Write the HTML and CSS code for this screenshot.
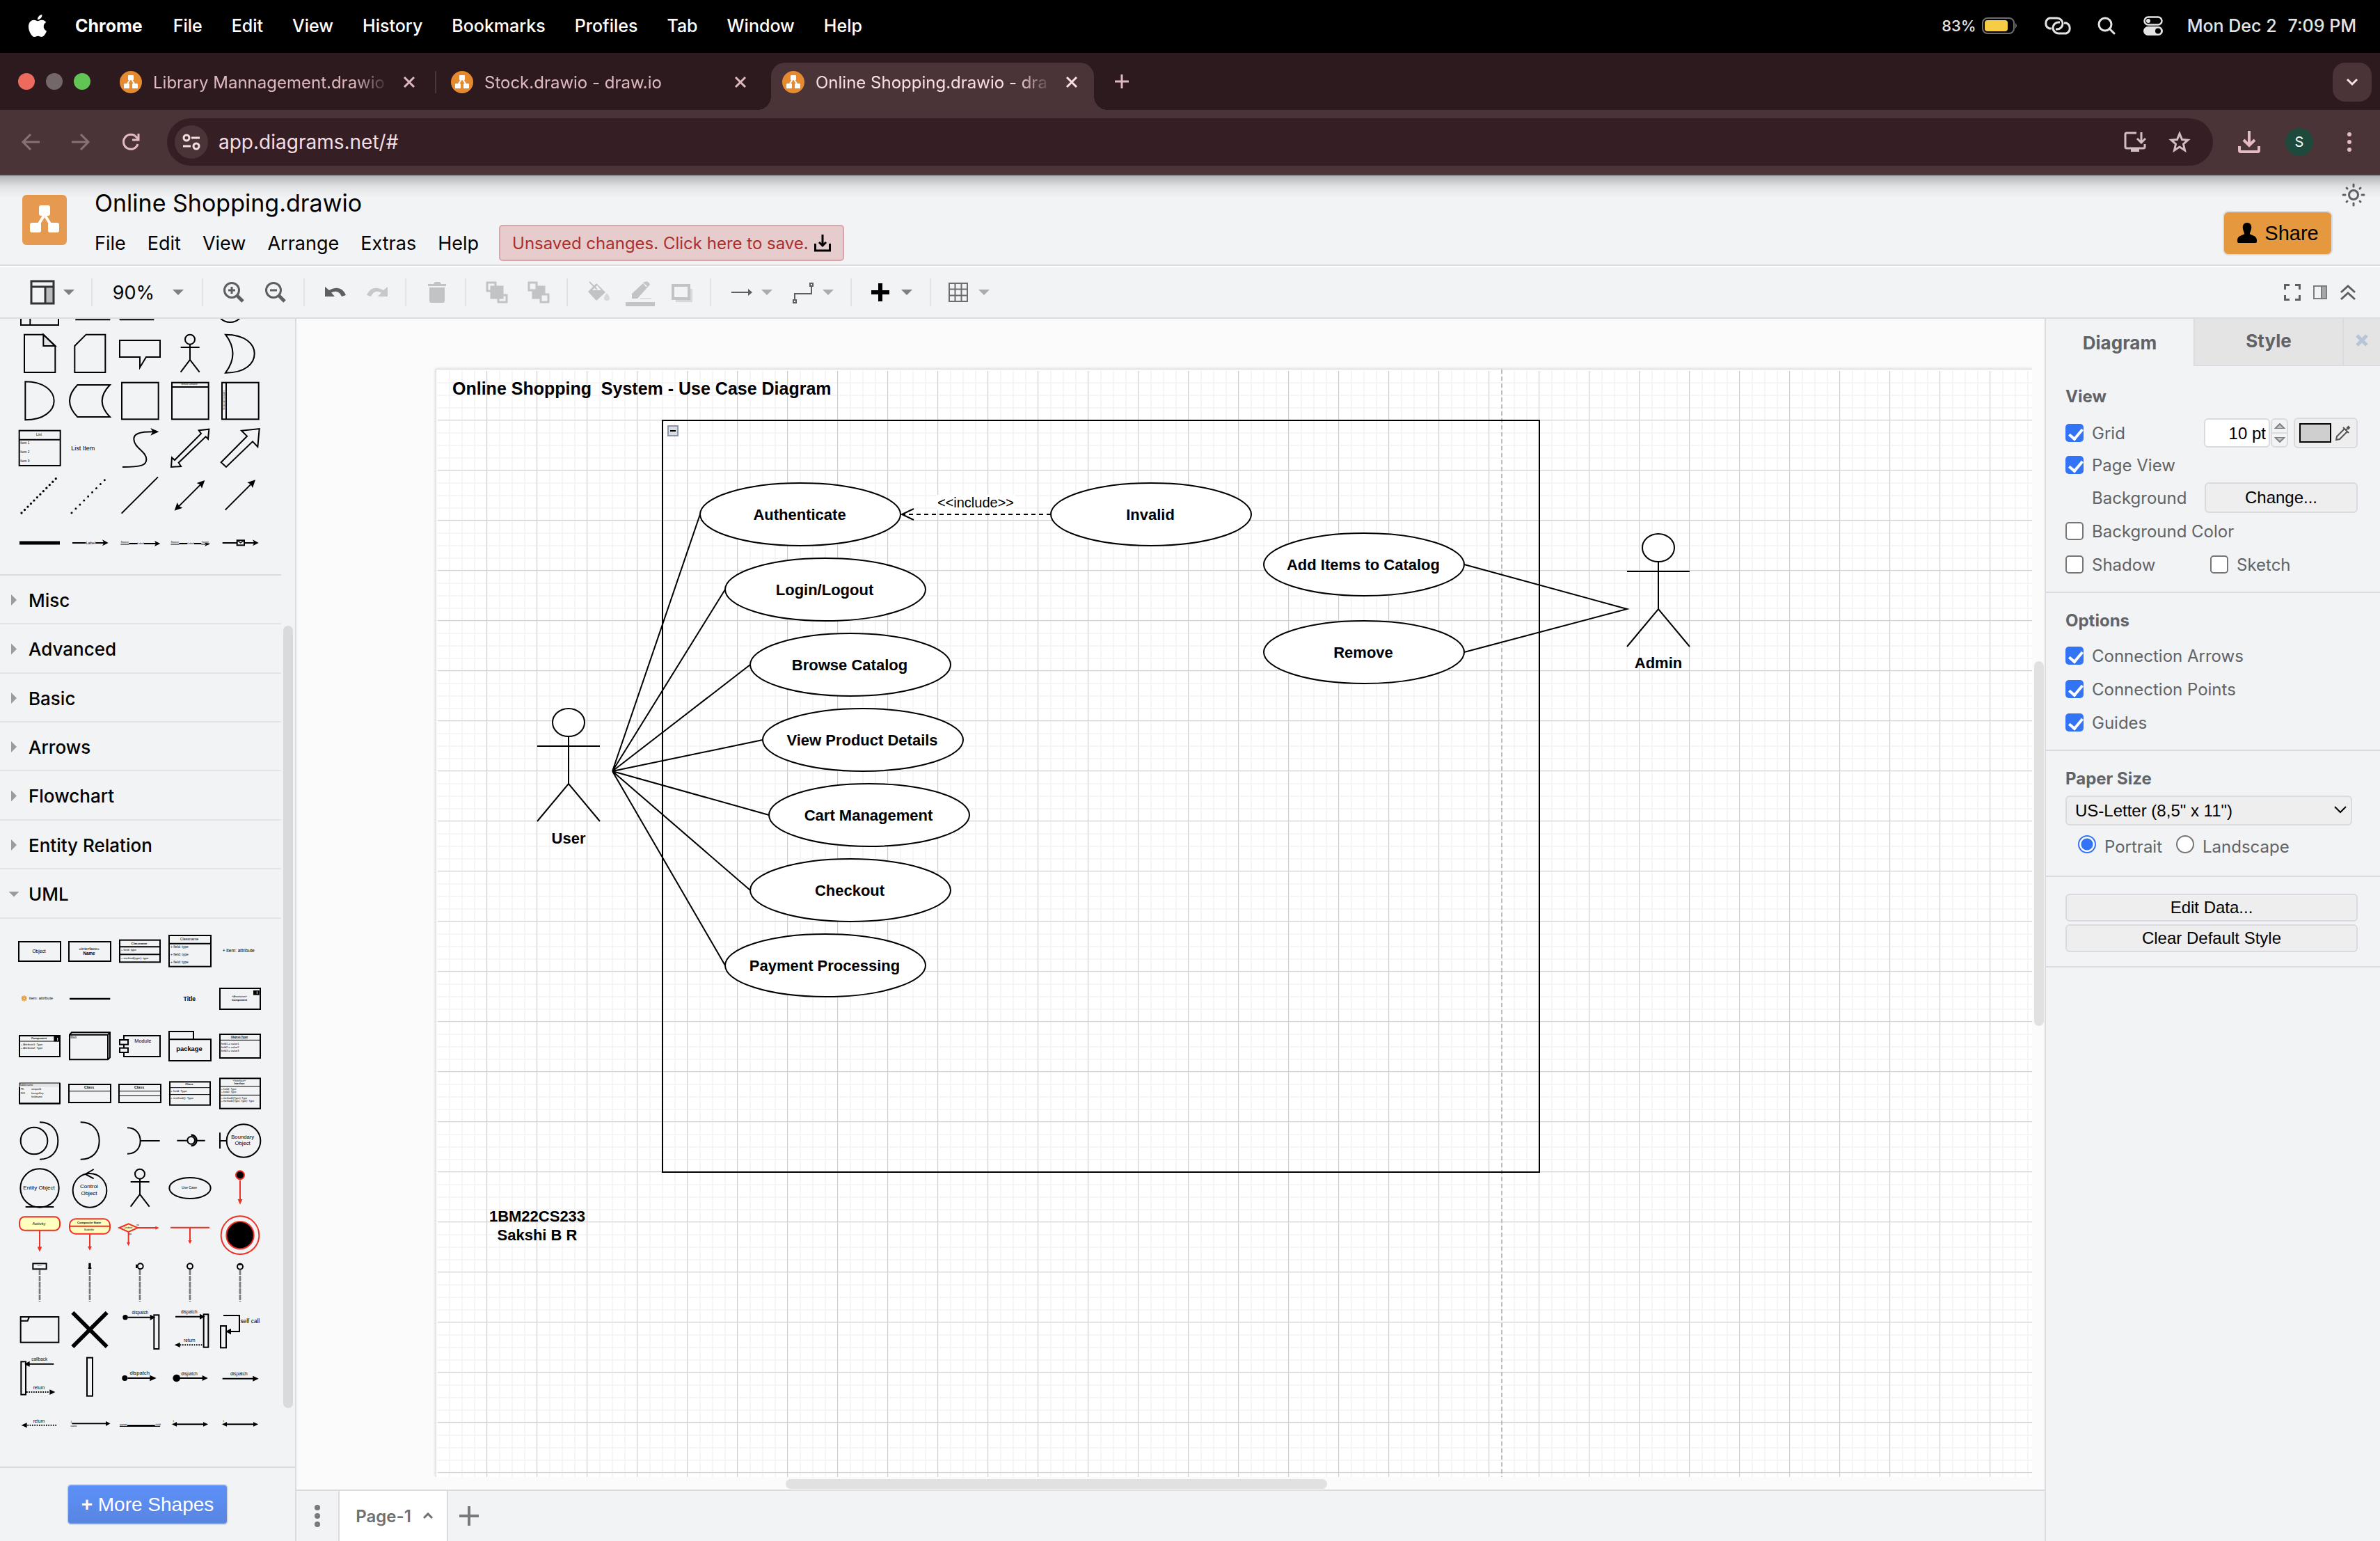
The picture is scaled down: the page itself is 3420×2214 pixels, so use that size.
FILE: index.html
```html
<!DOCTYPE html>
<html lang="en">
<head>
<meta charset="utf-8">
<title>Online Shopping.drawio - draw.io</title>
<link rel="stylesheet" href="styles.css">
</head>
<body>
<svg class="defs" width="0" height="0" aria-hidden="true">
  <symbol id="logo" viewBox="0 0 64 72"><path d="M31 30 20 48M33 30 44 48" stroke="#fff" stroke-width="4"/><rect x="24" y="15" width="16" height="15" rx="3" fill="#fff"/><rect x="11" y="40" width="16" height="14" rx="3" fill="#fff"/><rect x="37" y="40" width="16" height="14" rx="3" fill="#fff"/></symbol>
  <symbol id="fav" viewBox="0 0 32 32"><circle cx="16" cy="16" r="16" fill="#e58a2e"/><path d="M15 12 10 20M17 12 22 20" stroke="#fff" stroke-width="2"/><rect x="12" y="6" width="8" height="7" rx="1" fill="#fff"/><rect x="6" y="18" width="8" height="7" rx="1" fill="#fff"/><rect x="18" y="18" width="8" height="7" rx="1" fill="#fff"/></symbol>
  <symbol id="close" viewBox="0 0 20 20"><path d="M3 3 17 17M17 3 3 17" stroke="currentColor"/></symbol>
  <symbol id="caret" viewBox="0 0 16 8"><path d="M0 0H16L8 8Z" fill="currentColor"/></symbol>
</svg>

<header class="menubar">
  <nav class="menubar-menus">
    <svg class="apple" viewBox="0 0 24 24" fill="#fff"><path d="M12.152 6.896c-.948 0-2.415-1.078-3.96-1.04-2.04.027-3.91 1.183-4.961 3.014-2.117 3.675-.546 9.103 1.519 12.09 1.013 1.454 2.208 3.09 3.792 3.039 1.52-.065 2.09-.987 3.935-.987 1.831 0 2.35.987 3.96.948 1.637-.026 2.676-1.48 3.676-2.948 1.156-1.688 1.636-3.325 1.662-3.415-.039-.013-3.182-1.221-3.22-4.857-.026-3.04 2.48-4.494 2.597-4.559-1.429-2.09-3.623-2.324-4.39-2.376-2-.156-3.675 1.09-4.61 1.09zM15.53 3.83c.843-1.012 1.4-2.427 1.245-3.83-1.207.052-2.662.805-3.532 1.818-.78.896-1.454 2.338-1.273 3.714 1.338.104 2.715-.688 3.559-1.701"/></svg>
    <button class="strong">Chrome</button><button>File</button><button>Edit</button><button>View</button><button>History</button><button>Bookmarks</button><button>Profiles</button><button>Tab</button><button>Window</button><button>Help</button>
  </nav>
  <div class="status">
    <span class="battery">83%<svg width="52" height="24" viewBox="0 0 52 24"><rect x="1" y="1" width="45" height="22" rx="7" fill="none" stroke="#6e6e6e" stroke-width="2"/><rect x="4" y="4" width="33" height="16" rx="4" fill="#f7cd46"/><path d="M48 8q4 4 0 8z" fill="#6e6e6e"/></svg></span>
    <svg width="44" height="28" viewBox="0 0 44 28" fill="none" stroke="#e4e4e4" stroke-width="3"><path d="M13 18H10A8 8 0 0 1 10 3H21A8 8 0 0 1 21 19H19"/><path d="M31 10H34A8 8 0 0 1 34 25H23A8 8 0 0 1 23 9H25"/></svg>
    <svg class="search" width="26" height="26" viewBox="0 0 26 26" fill="none" stroke="#e4e4e4" stroke-width="3"><circle cx="11" cy="11" r="9"/><path d="M17 17 24 24" stroke-linecap="round"/></svg>
    <svg width="28" height="28" viewBox="0 0 28 28"><rect x="1.500" y="1.500" width="25" height="11" rx="5.500" fill="none" stroke="#e4e4e4" stroke-width="2.500"/><circle cx="7" cy="7" r="3" fill="#e4e4e4"/><rect y="15" width="28" height="13" rx="6.500" fill="#e4e4e4"/><circle cx="21" cy="21.500" r="4" fill="#000"/></svg>
    <span class="clock"><span>Mon Dec 2</span><span>7:09 PM</span></span>
  </div>
</header>

<div class="tabstrip">
  <div class="lights"><i class="red"></i><i class="gray"></i><i class="green"></i></div>
  <div class="tab"><svg class="fav"><use href="#fav"/></svg><span>Library Mannagement.drawio</span><button aria-label="Close tab"><svg class="x"><use href="#close"/></svg></button></div>
  <div class="tab divided"><svg class="fav"><use href="#fav"/></svg><span>Stock.drawio - draw.io</span><button aria-label="Close tab"><svg class="x"><use href="#close"/></svg></button></div>
  <div class="tab active"><svg class="fav"><use href="#fav"/></svg><span>Online Shopping.drawio - dra</span><button aria-label="Close tab"><svg class="x"><use href="#close"/></svg></button></div>
  <button class="newtab" aria-label="New tab"><svg width="22" height="22" viewBox="0 0 22 22"><path d="M11 1V21M1 11H21" stroke="#dfb9c0" stroke-width="3"/></svg></button>
  <button class="tabsearch" aria-label="Search tabs"><svg width="18" height="12" viewBox="0 0 18 12" fill="none" stroke="#fbdfe4" stroke-width="3"><path d="M2 2 9 9 16 2"/></svg></button>
</div>

<div class="navbar">
  <div class="navbtns">
    <button aria-label="Back"><svg viewBox="0 0 28 28" fill="none" stroke="#8a7174" stroke-width="3"><path d="M27 14H3M14 3 3 14 14 25"/></svg></button>
    <button aria-label="Forward"><svg viewBox="0 0 28 28" fill="none" stroke="#8a7174" stroke-width="3"><path d="M1 14H25M14 3 25 14 14 25"/></svg></button>
    <button aria-label="Reload"><svg viewBox="0 0 28 28" fill="none" stroke="#e3bcc3" stroke-width="3"><path d="M24 17A10.500 10.500 0 1 1 22 7L25 10"/><path d="M25 2V11H16" /></svg></button>
  </div>
  <div class="omnibox">
    <button class="siteinfo" aria-label="Site information"><svg width="26" height="26" viewBox="0 0 26 26" fill="none" stroke="#f3dde0" stroke-width="3"><circle cx="6" cy="7" r="4"/><path d="M13 7H25M1 19H12"/><circle cx="20" cy="19" r="4"/></svg></button>
    <input type="text" value="app.diagrams.net/#" aria-label="Address">
    <button aria-label="Install"><svg width="32" height="30" viewBox="0 0 32 30" fill="none" stroke="#d2bec1" stroke-width="3"><path d="M18 2H4Q2 2 2 4V22Q2 24 4 24H28Q30 24 30 22V18M25 1V15M19 10 25 16 31 10"/><path d="M10 27H22" stroke-width="4"/></svg></button>
    <button aria-label="Bookmark"><svg width="32" height="32" viewBox="0 0 32 32" fill="none" stroke="#d2bec1" stroke-width="3"><path d="M16 4 19.500 12.500 28 13.200 21.500 19 23.500 28 16 23 8.500 28 10.500 19 4 13.200 12.500 12.500Z"/></svg></button>
  </div>
  <button class="dl" aria-label="Downloads"><svg width="32" height="32" viewBox="0 0 32 32" fill="none" stroke="#e3bcc3" stroke-width="4"><path d="M16 0V21M8 13 16 21 24 13M2 22V28Q2 30 4 30H28Q30 30 30 28V22"/></svg></button>
  <button class="avatar" aria-label="Profile">S</button>
  <button class="kebab" aria-label="More"><svg width="8" height="30" viewBox="0 0 8 30" fill="#e3bcc3"><circle cx="4" cy="4" r="3"/><circle cx="4" cy="15" r="3"/><circle cx="4" cy="26" r="3"/></svg></button>
</div>

<div class="app">
  <div class="apphead">
    <div class="logo"><svg width="64" height="72"><use href="#logo"/></svg></div>
    <div class="headmain">
      <h1>Online Shopping.drawio</h1>
      <nav class="appmenu"><button>File</button><button>Edit</button><button>View</button><button>Arrange</button><button>Extras</button><button>Help</button>
        <button class="unsaved">Unsaved changes. Click here to save.<svg width="24" height="26" viewBox="0 0 24 26" fill="none" stroke="#000" stroke-width="3"><path d="M12 1V17M7 12 12 17 17 12M1.500 14V24H22.500V14"/></svg></button>
      </nav>
    </div>
    <div class="headright">
      <button class="sun" aria-label="Appearance"><svg width="34" height="34" viewBox="0 0 34 34" fill="none" stroke="#606367" stroke-width="3" stroke-linecap="round"><circle cx="17" cy="17" r="6.500"/><path d="M17 2V5M17 29V32M2 17H5M29 17H32M7 7 8 8M26 26 27 27M7 27 8 26M26 8 27 7"/></svg></button>
      <button class="share"><svg width="30" height="30" viewBox="0 0 30 30"><path d="M15 0C20 0 22 4 21 9C20 13 19 14 19 16C20 18 29 18 29 25V27Q29 29 27 29H3Q1 29 1 27V25C1 18 10 18 11 16C11 14 10 13 9 9C8 4 10 0 15 0Z"/></svg>Share</button>
    </div>
  </div>

  <div class="toolbar">
    <div class="group g-first"><button class="lay" aria-label="View"><svg width="36" height="36" viewBox="0 0 36 36" fill="none" stroke="#333" stroke-width="3"><rect x="22" y="10" width="11" height="23" fill="#b9babb" stroke="none"/><rect x="2" y="2" width="32" height="32"/><path d="M2 10H34M22 10V34"/></svg></button><svg class="car mid"><use href="#caret"/></svg></div>
    <div class="group g-zoom"><button class="zoom">90%</button><svg class="car mid"><use href="#caret"/></svg></div>
    <div class="group">
      <button aria-label="Zoom in"><svg viewBox="0 0 32 32" fill="none" stroke="#5d5f61" stroke-width="3"><circle cx="13" cy="13" r="10.500"/><path d="M13 8V18M8 13H18"/><path d="M21 21 29 29" stroke-width="5"/></svg></button>
      <button aria-label="Zoom out"><svg viewBox="0 0 32 32" fill="none" stroke="#5d5f61" stroke-width="3"><circle cx="13" cy="13" r="10.500"/><path d="M8 13H18"/><path d="M21 21 29 29" stroke-width="5"/></svg></button>
    </div>
    <div class="group">
      <button aria-label="Undo"><svg viewBox="0 0 32 32" fill="#5d5f61"><path d="M1 8V22H15L10 16.500Q20 11 25 22L31 20Q24 4 7 13Z"/></svg></button>
      <button aria-label="Redo"><svg viewBox="0 0 32 32" fill="#c6c8ca"><path d="M31 8V22H17L22 16.500Q12 11 7 22L1 20Q8 4 25 13Z"/></svg></button>
    </div>
    <div class="group one"><button aria-label="Delete"><svg viewBox="0 0 32 32" fill="#c1c3c4"><path d="M3 4H11L13 1H20L22 4H29V7H3ZM5 9H27V28Q27 31 24 31H8Q5 31 5 28Z"/></svg></button></div>
    <div class="group">
      <button aria-label="To front"><svg viewBox="0 0 32 32" fill="none" stroke="#c1c3c4" stroke-width="3"><path d="M14 8V2H2V14H8M24 20H30V30H18V24"/><rect x="8" y="8" width="16" height="16" fill="#c1c3c4"/></svg></button>
      <button aria-label="To back"><svg viewBox="0 0 32 32" fill="none" stroke="#c1c3c4" stroke-width="3"><rect x="8" y="8" width="16" height="16" fill="#c1c3c4"/><rect x="2" y="2" width="11" height="11" fill="#f1f3f5"/><rect x="19" y="19" width="11" height="11" fill="#f1f3f5"/></svg></button>
    </div>
    <div class="group g-three">
      <button aria-label="Fill color"><svg viewBox="0 0 32 32"><path d="M1 15 13 3 26 16 13 28Z" fill="#c1c3c4"/><path d="M7 13 14 6 20 13Z" fill="#f1f3f5"/><path d="M3 1 14 12" stroke="#c1c3c4" stroke-width="2"/><path d="M28 17Q36 27 28 28Q20 27 28 17" fill="#d6d8da"/></svg></button>
      <button aria-label="Line color"><svg viewBox="0 0 32 32" overflow="visible"><path d="M4 18 20 3 24 8 28 7 12 25H4Z" fill="#c1c3c4"/><path d="M22 1Q28 -1 30 5L27 8 20 2Z" fill="#c1c3c4"/><path d="M16 25H32" stroke="#dcdee0" stroke-width="2"/><path d="M-5 33H37" stroke="#c1c3c4" stroke-width="6"/></svg></button>
      <button aria-label="Shadow"><svg viewBox="0 0 32 32"><rect x="7" y="11" width="24" height="19" fill="#d6d8da"/><rect x="3" y="6" width="23" height="19" fill="#f1f3f5" stroke="#c1c3c4" stroke-width="4"/></svg></button>
    </div>
    <div class="group g-conn">
      <button aria-label="Connection"><svg viewBox="0 0 32 32"><path d="M1 16H26" stroke="#5d5f61" stroke-width="2"/><path d="M25 11 31 16 25 21Z" fill="#5d5f61"/></svg></button><svg class="car light"><use href="#caret"/></svg>
      <button class="gapl" aria-label="Waypoints"><svg viewBox="0 0 32 32" fill="none" stroke="#5d5f61" stroke-width="2"><path d="M4 27V18H28V8"/><rect x="2" y="27" width="4" height="4"/><rect x="26" y="3" width="4" height="4"/></svg></button><svg class="car light"><use href="#caret"/></svg>
    </div>
    <div class="group g-plus"><button aria-label="Insert"><svg viewBox="0 0 32 32"><path d="M16 3V29M3 16H29" stroke="#000" stroke-width="6"/></svg></button><svg class="car mid"><use href="#caret"/></svg></div>
    <div class="group g-table"><button aria-label="Table"><svg viewBox="0 0 32 32" fill="none" stroke="#6b6d6f" stroke-width="2"><rect x="3" y="3" width="26" height="26"/><path d="M3 11.500H29M3 20.500H29M11.500 3V29M20.500 3V29"/></svg></button><svg class="car light"><use href="#caret"/></svg></div>
    <div class="toolright">
      <button aria-label="Fullscreen"><svg viewBox="0 0 24 24" fill="none" stroke="#5d5f61" stroke-width="3"><path d="M1.500 8V1.500H8M16 1.500H22.500V8M22.500 16V22.500H16M8 22.500H1.500V16"/></svg></button>
      <button aria-label="Format"><svg viewBox="0 0 24 24" fill="none" stroke="#7b7d80" stroke-width="2"><rect x="14" y="3" width="7" height="18" fill="#a6a8aa"/><rect x="3" y="3" width="18" height="18"/></svg></button>
      <button aria-label="Collapse"><svg viewBox="0 0 24 24" fill="none" stroke="#5d5f61" stroke-width="3"><path d="M2 12 12 3 22 12M2 22 12 13 22 22"/></svg></button>
    </div>
  </div>

  <div class="work">
    <aside class="sidebar">
      <div class="palettes">
        <div class="palette general">
          <svg viewBox="63 -102 216 204"><path d="M90 -40V81H252V-40M130 -40V81"/></svg>
          <svg viewBox="279 -102 216 204"><path d="M325 58H475"/></svg>
          <svg viewBox="495 -102 216 204"><path d="M515 58H664"/></svg>
          <svg viewBox="711 -102 216 204"></svg>
          <svg viewBox="927 -102 216 204"><circle cx="992" cy="10" r="59"/></svg>

          <svg viewBox="63 102 216 204"><path d="M187 122 238 171H187Z" fill="#e3e3e3"/><path d="M105 122H187L238 171V285H105Z"/></svg>
          <svg viewBox="279 102 216 204"><path d="M371 122H454V285H322V171Z"/></svg>
          <svg viewBox="495 102 216 204"><path d="M516 147H690V219H630L603 264V219H516Z"/></svg>
          <svg viewBox="711 102 216 204"><circle cx="819" cy="143" r="21"/><path d="M819 164V230M779 177H860M779 284 819 231 860 284"/></svg>
          <svg viewBox="927 102 216 204"><path d="M972 122C1060 122 1097 165 1097 204C1097 245 1060 287 972 287Q1035 204 972 122Z"/></svg>

          <svg viewBox="63 306 216 204"><path d="M109 325C190 325 233 365 233 408C233 450 190 490 109 490Z"/></svg>
          <svg viewBox="279 306 216 204"><path d="M334 339H474Q406 408 474 477H334Q266 408 334 339Z"/></svg>
          <svg viewBox="495 306 216 204"><rect x="525" y="329" width="158" height="158"/></svg>
          <svg viewBox="711 306 216 204"><rect x="741" y="329" width="158" height="158"/><path d="M741 348H899"/><text x="816" y="340" font-size="9">Vertical Container</text></svg>
          <svg viewBox="927 306 216 204"><rect x="957" y="329" width="158" height="158"/><path d="M975 329V487"/><text x="966" y="408" font-size="9" transform="rotate(-90 966 405)">Horizontal Container</text></svg>

          <svg viewBox="63 510 216 204"><rect x="83" y="536" width="177" height="151"/><path d="M83 575H260"/><text x="168" y="558" font-size="15">List</text><g class="s"><text x="88" y="594" font-size="14">Item 1</text><text x="88" y="633" font-size="14">Item 2</text><text x="88" y="671" font-size="14">Item 3</text></g></svg>
          <svg viewBox="279 510 216 204"><text x="358" y="621" font-size="27">List Item</text></svg>
          <svg viewBox="495 510 216 204"><path d="M528 693C610 693 631 685 631 660C631 625 577 610 577 572C577 550 600 541 660 541"/><path class="f" d="M685 541 649 525 658 541 649 557Z"/></svg>
          <svg viewBox="711 510 216 204"><path d="M901 530 897 572 887 562 770 674 780 690 738 693 741 652 753 663 867 549 857 535Z"/></svg>
          <svg viewBox="927 510 216 204"><path d="M1118 528 1111 606 1089 583 975 693 953 673 1065 560 1041 536Z"/></svg>

          <svg viewBox="63 714 216 204"><path d="M93 891 247 737" stroke-width="10" stroke-linecap="round" stroke-dasharray="0 19"/></svg>
          <svg viewBox="279 714 216 204"><path d="M309 890 456 744" stroke-width="9" stroke-linecap="round" stroke-dasharray="0 25"/></svg>
          <svg viewBox="495 714 216 204"><path d="M524 893 681 736"/></svg>
          <svg viewBox="711 714 216 204"><path d="M768 865 867 766"/><path class="f" d="M883 750 848 762 863 769 870 785ZM752 881 764 846 772 862 787 869Z"/></svg>
          <svg viewBox="927 714 216 204"><path d="M971 878 1085 764"/><path class="f" d="M1101 748 1066 760 1081 767 1089 783Z"/></svg>

          <svg viewBox="63 918 216 204"><path d="M84 1020H258" stroke-width="15"/></svg>
          <svg viewBox="279 918 216 204"><path d="M312 1020H370M412 1020H450"/><path class="f" d="M467 1020 441 1006 448 1020 441 1033Z"/><text x="391" y="1026" font-size="17">Label</text></svg>
          <svg viewBox="495 918 216 204"><path d="M520 1026H556" stroke-width="3"/><path d="M556 1023H593M620 1023H672"/><path class="f" d="M691 1023 666 1011 672 1023 666 1035Z"/><text x="538" y="1020" font-size="11">Source</text><text x="606" y="1027" font-size="11">Label</text></svg>
          <svg viewBox="711 918 216 204"><path d="M736 1026H772M868 1026H900" stroke-width="3"/><path d="M772 1023H808M836 1023H868"/><path class="f" d="M907 1023 882 1019 888 1026 882 1035Z"/><text x="754" y="1020" font-size="11">Source</text><text x="822" y="1027" font-size="11">Label</text><text x="884" y="1020" font-size="11">Target</text></svg>
          <svg viewBox="927 918 216 204"><path d="M959 1020H1020M1055 1020H1098"/><rect x="1022" y="1009" width="31" height="21"/><path d="M1022 1009 1037 1020 1053 1009" stroke-width="4"/><path class="f" d="M1115 1020 1089 1006 1096 1020 1089 1033Z"/></svg>
        </div>

        <div class="sections">
          <button>Misc</button><button>Advanced</button><button>Basic</button><button>Arrows</button><button>Flowchart</button><button>Entity Relation</button><button class="open">UML</button>
        </div>

        <div class="palette uml">
          <svg viewBox="63 69 216 204"><rect x="81" y="129" width="180" height="84"/><text x="168" y="178" font-size="20">Object</text></svg>
          <svg viewBox="279 69 216 204"><rect x="297" y="129" width="180" height="84"/><text x="384" y="165" font-size="18">«interface»</text><text class="b" x="384" y="186" font-size="19">Name</text></svg>
          <svg viewBox="495 69 216 204"><rect x="516" y="122" width="174" height="95"/><path d="M516 151H690M516 184H690"/><text class="b" x="600" y="142" font-size="13">Classname</text><g class="s"><text x="521" y="168" font-size="13">+ field: type</text><text x="521" y="204" font-size="13">+ method(type): type</text></g></svg>
          <svg viewBox="711 69 216 204"><rect x="729" y="102" width="180" height="134"/><path d="M729 137H909"/><text x="816" y="123" font-size="16">Classname</text><g class="s"><text x="735" y="156" font-size="15">+ field: type</text><text x="735" y="189" font-size="15">+ field: type</text><text x="735" y="222" font-size="15">+ field: type</text></g></svg>
          <svg viewBox="927 69 216 204"><text x="1028" y="174" font-size="20">+ item: attribute</text></svg>

          <svg viewBox="63 273 216 204"><path d="M104 361V386M92 373H116M95 364 113 382M113 364 95 382" stroke="#e8a33f"/><circle cx="104" cy="373" r="5" fill="#fbd98e" stroke="#c77a2b" stroke-width="2"/><text x="177" y="378" font-size="17">item: attribute</text></svg>
          <svg viewBox="279 273 216 204"><path d="M300 375H475" stroke-width="8"/></svg>
          <svg viewBox="495 273 216 204"></svg>
          <svg viewBox="711 273 216 204"><text class="b" x="817" y="384" font-size="26">Title</text></svg>
          <svg viewBox="927 273 216 204"><rect x="948" y="330" width="174" height="90"/><path class="f" d="M1092 339H1118V359H1092Z"/><path d="M1108 343V354" stroke="#fff" stroke-width="3"/><text x="1032" y="369" font-size="11">«Annotation»</text><text class="b" x="1032" y="384" font-size="12">Component</text></svg>

          <svg viewBox="63 477 216 204"><rect x="84" y="534" width="174" height="90"/><path d="M84 558H258" stroke-width="3"/><path class="f" d="M232 536H258V559H232Z"/><path d="M248 543V555" stroke="#fff" stroke-width="3"/><text class="b" x="168" y="549" font-size="12">Component</text><g class="s"><text x="90" y="577" font-size="12">+ Attribute1: Type</text><text x="90" y="591" font-size="12">+ Attribute2: Type</text></g></svg>
          <svg viewBox="279 477 216 204"><path d="M300 530 309 520H474V628L465 637H300ZM300 530H465V637M465 530 474 520"/><text x="317" y="542" font-size="11" text-decoration="underline">Block</text></svg>
          <svg viewBox="495 477 216 204"><path d="M534 553V534H690V624H534V606M534 573V587"/><rect x="516" y="552" width="36" height="20"/><rect x="516" y="587" width="36" height="19"/><text x="616" y="565" font-size="22">Module</text></svg>
          <svg viewBox="711 477 216 204"><path d="M729 642V516H834V550H909V642ZM729 550H834"/><text class="b" x="816" y="600" font-size="28">package</text></svg>
          <svg viewBox="927 477 216 204"><rect x="948" y="528" width="174" height="102"/><path d="M948 553H1122" stroke-width="3"/><text class="b" x="1032" y="542" font-size="13" text-decoration="underline">Object:Type</text><g class="s"><text x="953" y="573" font-size="12">field1 = value1</text><text x="953" y="588" font-size="12">field2 = value2</text><text x="953" y="603" font-size="12">field3 = value3</text></g></svg>

          <svg viewBox="63 681 216 204"><path d="M84 738H258V755H84Z" fill="#e4e4e4" stroke="none"/><rect x="84" y="738" width="174" height="90" stroke-width="3"/><path d="M84 756V826H258V738"/><g class="s"><text x="84" y="750" font-size="12">Tablename</text><text x="89" y="768" font-size="11">PK</text><text x="135" y="768" font-size="11">uniqueId</text><text x="89" y="786" font-size="11">FK1</text><text x="135" y="786" font-size="11">foreignKey</text><text x="135" y="801" font-size="11">fieldname</text></g></svg>
          <svg viewBox="279 681 216 204"><rect x="297" y="744" width="180" height="78"/><path d="M297 773H477" stroke-width="3"/><text class="b" x="384" y="763" font-size="16">Class</text></svg>
          <svg viewBox="495 681 216 204"><rect x="513" y="744" width="180" height="78"/><path d="M513 773H693M513 792H693" stroke-width="3"/><text class="b" x="600" y="763" font-size="16">Class</text></svg>
          <svg viewBox="711 681 216 204"><rect x="732" y="733" width="174" height="100"/><path d="M732 758H906M732 788H906" stroke-width="3"/><text class="b" x="816" y="747" font-size="13">Class</text><g class="s"><text x="736" y="777" font-size="13">+ field: Type</text><text x="736" y="807" font-size="13">+ method(): Type</text></g></svg>
          <svg viewBox="927 681 216 204"><rect x="948" y="718" width="174" height="130"/><path d="M948 752H1122M948 790H1122" stroke-width="3"/><text x="1032" y="732" font-size="11">«Interface»</text><text class="b" x="1032" y="745" font-size="11">Interface</text><g class="s"><text x="953" y="768" font-size="11">+ field1: Type</text><text x="953" y="780" font-size="11">+ field2: Type</text><text x="953" y="807" font-size="11">+ method1(Type): Type</text><text x="953" y="819" font-size="11">+ method2(Type, Type): Type</text></g></svg>

          <svg viewBox="63 885 216 204"><circle cx="147" cy="987" r="58"/><path d="M171 907C225 907 250 945 250 987C250 1030 225 1067 171 1067"/></svg>
          <svg viewBox="279 885 216 204"><path d="M347 907C403 907 428 945 428 987C428 1030 403 1067 347 1067"/></svg>
          <svg viewBox="495 885 216 204"><path d="M549 931C588 931 605 960 605 987C605 1015 588 1043 549 1043M605 987H689"/></svg>
          <svg viewBox="711 885 216 204"><path d="M763 986H806M848 986H884"/><circle cx="824" cy="985" r="16"/><path d="M824 962C855 962 855 1008 824 1008" stroke-width="8"/></svg>
          <svg viewBox="927 885 216 204"><ellipse cx="1050" cy="987" rx="73" ry="71"/><path d="M948 952V1021M948 987H977"/><text x="1046" y="979" font-size="23">Boundary</text><text x="1046" y="1005" font-size="23">Object</text></svg>

          <svg viewBox="63 1089 216 204"><circle cx="171" cy="1191" r="83"/><path d="M110 1272H232"/><text x="168" y="1197" font-size="24">Entity Object</text></svg>
          <svg viewBox="279 1089 216 204"><circle cx="387" cy="1201" r="73"/><path d="M404 1110 368 1131 404 1150"/><text x="384" y="1191" font-size="24">Control</text><text x="384" y="1220" font-size="24">Object</text></svg>
          <svg viewBox="495 1089 216 204"><circle cx="603" cy="1130" r="21"/><path d="M603 1151V1218M563 1164H644M563 1271 603 1218 644 1271"/></svg>
          <svg viewBox="711 1089 216 204"><ellipse cx="819" cy="1191" rx="89" ry="45"/><text x="816" y="1194" font-size="15">Use Case</text></svg>
          <svg viewBox="927 1089 216 204" class="r"><path d="M1035 1158V1245"/><path class="fr" d="M1025 1239H1045L1035 1262Z"/><circle cx="1035" cy="1135" r="18" fill="#000"/></svg>

          <svg viewBox="63 153 216 204" class="r"><rect x="84" y="175" width="174" height="58" rx="22" fill="#ffffc0"/><path d="M171 233V310"/><path class="fr" d="M161 304H181L171 326Z"/><text x="168" y="210" font-size="18">Activity</text></svg>
          <svg viewBox="279 153 216 204" class="r"><rect x="300" y="184" width="174" height="64" rx="26" fill="#ffffc0"/><path d="M300 215H474M387 248V305"/><path class="fr" d="M378 302H396L387 320Z"/><text class="b" x="384" y="203" font-size="13">Composite State</text><text x="384" y="233" font-size="13">Subtitle</text></svg>
          <svg viewBox="495 153 216 204" class="r"><path d="M514 222 554 205 594 222 554 240Z" fill="#ffffc0"/><path d="M592 222H674M554 240V288"/><path class="fr" d="M670 215V230L686 222ZM546 284H561L554 301Z"/><text x="552" y="225" font-size="9">Condition</text><text x="594" y="213" font-size="9">no</text><text x="561" y="253" font-size="9">yes</text></svg>
          <svg viewBox="711 153 216 204" class="r"><path d="M735 221H903M819 221V280"/><path class="fr" d="M811 276H827L819 292Z"/></svg>
          <svg viewBox="927 153 216 204" class="r"><circle cx="1035" cy="254" r="82"/><circle cx="1035" cy="254" r="59" fill="#000"/></svg>

          <svg viewBox="63 357 216 204"><rect x="142" y="376" width="58" height="24"/><text x="169" y="386" font-size="6">:Object</text><path class="ll" d="M171 402V540"/></svg>
          <svg viewBox="279 357 216 204"><path d="M387 374V398" stroke-width="10"/><path d="M380 396H394"/><path class="ll" d="M387 402V540"/></svg>
          <svg viewBox="495 357 216 204"><circle cx="605" cy="388" r="12"/><path d="M588 380V396"/><path class="ll" d="M603 402V540"/></svg>
          <svg viewBox="711 357 216 204"><circle cx="819" cy="388" r="12"/><path class="ll" d="M819 402V540"/></svg>
          <svg viewBox="927 357 216 204"><circle cx="1035" cy="389" r="12"/><path d="M1027 380H1043"/><path class="ll" d="M1035 402V540"/></svg>

          <svg viewBox="63 561 216 204"><rect x="89" y="606" width="164" height="110"/><path d="M89 623H119L126 606"/></svg>
          <svg viewBox="279 561 216 204"><path d="M313 587 461 735M461 587 313 735" stroke-width="17"/></svg>
          <svg viewBox="495 561 216 204"><circle class="f" cx="540" cy="608" r="11"/><path d="M550 608H655"/><path class="f" d="M647 596V620L670 608Z"/><rect x="664" y="598" width="21" height="146"/><text x="604" y="595" font-size="19">dispatch</text></svg>
          <svg viewBox="711 561 216 204"><path d="M756 605H865"/><path d="M776 727H876" stroke-dasharray="5 5"/><path class="f" d="M861 593V617L884 605ZM776 716V738L752 727Z"/><rect x="878" y="595" width="20" height="142"/><text x="815" y="592" font-size="19">dispatch</text><text x="817" y="714" font-size="19">return</text></svg>
          <svg viewBox="927 561 216 204"><path d="M963 600H1032V669H995"/><path class="f" d="M996 656V682L972 669Z"/><rect x="951" y="645" width="24" height="94"/><text x="1078" y="634" font-size="25">self call</text></svg>

          <svg viewBox="63 765 216 204"><rect x="91" y="799" width="20" height="142"/><path d="M122 809H232"/><path class="f" d="M128 797V821L105 809ZM214 919V942L238 930Z"/><path d="M114 930H214" stroke-dasharray="5 5"/><text x="170" y="796" font-size="19">callback</text><text x="168" y="918" font-size="19">return</text></svg>
          <svg viewBox="279 765 216 204"><rect x="375" y="782" width="24" height="165"/></svg>
          <svg viewBox="495 765 216 204"><circle class="f" cx="538" cy="870" r="12"/><path d="M550 870H650"/><path class="f" d="M646 857V883L674 870Z"/><text x="602" y="856" font-size="23">dispatch</text></svg>
          <svg viewBox="711 765 216 204"><circle class="f" cx="761" cy="870" r="16"/><path d="M775 870H876"/><path class="f" d="M872 858V882L896 870Z"/><text x="816" y="859" font-size="19">dispatch</text></svg>
          <svg viewBox="927 765 216 204"><path d="M959 872H1094"/><path class="f" d="M1090 860V884L1115 872Z"/><text x="1030" y="859" font-size="20">dispatch</text></svg>

          <svg viewBox="63 969 216 204"><path class="f" d="M116 1062V1084L92 1073Z"/><path d="M118 1073H243" stroke-dasharray="5 5"/><text x="168" y="1061" font-size="19">return</text></svg>
          <svg viewBox="279 969 216 204"><path d="M310 1066H460"/><path class="f" d="M456 1056V1076L476 1066Z"/><text x="307" y="1062" font-size="9">1</text><text x="318" y="1080" font-size="11">name</text></svg>
          <svg viewBox="495 969 216 204"><path d="M516 1078H690" stroke-width="3"/><path d="M549 1074H668"/><text x="532" y="1074" font-size="11">parent</text><text x="681" y="1074" font-size="11">child</text></svg>
          <svg viewBox="711 969 216 204"><path d="M756 1069H880"/><path class="f" d="M876 1059V1079L897 1069ZM762 1059V1079L741 1069Z"/><text x="748" y="1059" font-size="9">1</text></svg>
          <svg viewBox="927 969 216 204"><path d="M972 1069H1096"/><path class="f" d="M1092 1059V1079L1113 1069ZM978 1059V1079L957 1069Z"/><text x="964" y="1059" font-size="9">1</text></svg>
        </div>
        <i class="sidescroll"></i>
      </div>
      <div class="more"><button><b>+</b> More Shapes</button></div>
    </aside>

    <main class="canvas">
      <div class="viewport">
        <div class="paper">
          <svg class="diagram" width="2293" height="1591" viewBox="627 531 2293 1591">
            <path d="M2158 531V2122" stroke="#bdbdbd" stroke-width="2" stroke-dasharray="6 4"/>
            <text x="650" y="567" font-size="25" class="st">Online Shopping&#160; System - Use Case Diagram</text>
            <rect x="952" y="604" width="1260" height="1080"/>
            <rect x="960" y="612" width="14" height="14" fill="#d9dde3" stroke="#8d97a5"/><path d="M963 619H971"/>
            <path d="M880 1108 1006 739M880 1108 1042 847M880 1108 1078 955M880 1108 1096 1063M880 1108 1105 1171M880 1108 1078 1279M880 1108 1042 1387"/>
            <path d="M2104 811 2338 875 2104 937"/>
            <path d="M1510 739H1296" stroke-dasharray="6 5"/><path d="M1313 731 1296 739 1313 747"/>
            <g class="uses">
              <ellipse cx="1150" cy="739" rx="144" ry="45"/><ellipse cx="1654" cy="739" rx="144" ry="45"/><ellipse cx="1186" cy="847" rx="144" ry="45"/><ellipse cx="1222" cy="955" rx="144" ry="45"/><ellipse cx="1240" cy="1063" rx="144" ry="45"/><ellipse cx="1249" cy="1171" rx="144" ry="45"/><ellipse cx="1222" cy="1279" rx="144" ry="45"/><ellipse cx="1186" cy="1387" rx="144" ry="45"/><ellipse cx="1960" cy="811" rx="144" ry="45"/><ellipse cx="1960" cy="937" rx="144" ry="45"/>
              <ellipse cx="817" cy="1038" rx="23" ry="20"/><ellipse cx="2383" cy="787" rx="23" ry="20"/>
            </g>
            <path d="M817 1058V1126M772 1072H862M772 1180 817 1126 862 1180M2383 807V875M2338 821H2428M2338 929 2383 875 2428 929"/>
            <rect x="1346" y="711" width="112" height="22" fill="#fff" stroke="none"/>
            <text class="n" x="1402" y="729" font-size="20">&lt;&lt;include&gt;&gt;</text>
            <g font-size="22">
              <text x="1149" y="747">Authenticate</text><text x="1653" y="747">Invalid</text><text x="1185" y="855">Login/Logout</text><text x="1221" y="963">Browse Catalog</text><text x="1239" y="1071">View Product Details</text><text x="1248" y="1179">Cart Management</text><text x="1221" y="1287">Checkout</text><text x="1185" y="1395">Payment Processing</text><text x="1959" y="819">Add Items to Catalog</text><text x="1959" y="945">Remove</text><text x="817" y="1212">User</text><text x="2383" y="960">Admin</text><text x="772" y="1755">1BM22CS233</text><text x="772" y="1782">Sakshi B R</text>
            </g>
          </svg>
        </div>
      </div>
      <i class="vscroll"></i><i class="hscroll"></i>
      <div class="pages">
        <button class="pdots" aria-label="Pages"><svg width="8" height="32" viewBox="0 0 8 32" fill="#77797c"><circle cx="4" cy="4" r="4"/><circle cx="4" cy="16" r="4"/><circle cx="4" cy="28" r="4"/></svg></button>
        <button class="ptab">Page-1<svg width="14" height="10" viewBox="0 0 14 10" fill="none" stroke="#707070" stroke-width="3"><path d="M1 8 7 2 13 8"/></svg></button>
        <button class="padd" aria-label="Insert page"><svg width="28" height="28" viewBox="0 0 28 28"><path d="M14 0V28M0 14H28" stroke="#77797c" stroke-width="4"/></svg></button>
      </div>
    </main>

    <aside class="format">
      <div class="ftabs"><button class="cur">Diagram</button><button>Style</button><button class="fx" aria-label="Close"><svg class="x"><use href="#close"/></svg></button></div>
      <section class="view">
        <h2>View</h2>
        <div class="row r46"><label><input type="checkbox" checked>Grid</label>
          <div class="right"><input class="num" type="text" value="10 pt" aria-label="Grid size"><div class="spin"><button aria-label="Increase"><svg width="16" height="8" viewBox="0 0 16 8"><path d="M1 8H15L8 1Z" fill="#c4c4c4" stroke="#808080" stroke-width="2"/></svg></button><button aria-label="Decrease"><svg width="16" height="8" viewBox="0 0 16 8"><path d="M1 0H15L8 7Z" fill="#c4c4c4" stroke="#808080" stroke-width="2"/></svg></button></div>
          <button class="btn color" aria-label="Grid color"><i></i><svg width="22" height="22" viewBox="0 0 22 22" fill="none" stroke="#555" stroke-width="2"><path d="M1 21 2 16 13 5 17 9 6 20ZM11 3 19 11M15 7 19 3"/><path d="M17 5 20 2" stroke-width="4"/></svg></button></div></div>
        <div class="row r46"><label><input type="checkbox" checked>Page View</label></div>
        <div class="row"><span class="ind">Background</span><button class="btn change">Change...</button></div>
        <div class="row"><label><input type="checkbox">Background Color</label></div>
        <div class="row"><label class="half"><input type="checkbox">Shadow</label><label><input type="checkbox">Sketch</label></div>
      </section>
      <section class="opts">
        <h2>Options</h2>
        <div class="row"><label><input type="checkbox" checked>Connection Arrows</label></div>
        <div class="row"><label><input type="checkbox" checked>Connection Points</label></div>
        <div class="row"><label><input type="checkbox" checked>Guides</label></div>
      </section>
      <section class="papersec">
        <h2><label for="paper">Paper Size</label></h2>
        <div class="selwrap"><select id="paper"><option>US-Letter (8,5" x 11")</option></select><svg width="18" height="12" viewBox="0 0 18 12" fill="none" stroke="#000" stroke-width="2"><path d="M1 2 9 10 17 2"/></svg></div>
        <div class="radios"><label><input type="radio" name="o" checked>Portrait</label><label><input type="radio" name="o">Landscape</label></div>
      </section>
      <section class="acts"><button class="btn">Edit Data...</button><button class="btn">Clear Default Style</button></section>
    </aside>
  </div>
</div>
</body>
</html>
```
FILE: styles.css
```css
* { box-sizing: border-box; }
html, body { margin: 0; height: 100%; }
body { display: flex; flex-direction: column; overflow: hidden; background: #f1f3f5; font-family: Inter, sans-serif; font-size: 24px; color: #000; }
button { border: 0; padding: 0; margin: 0; background: none; font: inherit; color: inherit; white-space: nowrap; }
svg { display: block; flex: none; }
i { display: block; }
.defs { position: absolute; }

/* macOS menu bar */
.menubar { height: 76px; flex: none; background: #000; color: #fff; display: flex; justify-content: space-between; align-items: center; padding: 0 34px 2px 38px; font-size: 25px; font-weight: 500; }
.menubar-menus { display: flex; align-items: center; gap: 42px; }
.apple { width: 32px; height: 32px; margin-right: -4px; }
.strong { font-weight: 700; margin-right: 2px; }
.status { display: flex; align-items: center; gap: 35px; color: #e4e4e4; }
.battery { display: flex; align-items: center; gap: 8px; font-size: 22px; }
.search { margin-right: 5px; }
.clock { display: flex; gap: 16px; }

/* browser tabs */
.tabstrip { height: 82px; flex: none; background: #2d1a1e; display: flex; padding: 14px 12px 0 26px; color: #dfb9c0; }
.lights { display: flex; gap: 16px; padding-top: 15px; margin-right: 26px; }
.lights i { width: 24px; height: 24px; border-radius: 50%; }
.red { background: #ed6a5e; }
.gray { background: #746769; }
.green { background: #61c454; }
.tab { position: relative; width: 464px; height: 68px; margin-right: 12px; padding: 0 22px 12px 16px; display: flex; align-items: center; gap: 16px; }
.tab span { flex: 1; white-space: nowrap; -webkit-mask-image: linear-gradient(90deg, #000 290px, transparent 340px); mask-image: linear-gradient(90deg, #000 290px, transparent 340px); }
.fav { width: 32px; height: 32px; }
.x { width: 20px; height: 20px; stroke-width: 3; }
.divided::before { content: ""; position: absolute; left: -7px; top: 12px; width: 2px; height: 32px; background: #4b3437; }
.active { background: #4b3437; color: #fbdfe4; border-radius: 20px 20px 0 0; }
.active::before, .active::after { content: ""; position: absolute; bottom: 0; width: 20px; height: 20px; }
.active::before { left: -20px; background: radial-gradient(circle at 0 0, transparent 20px, #4b3437 20px); }
.active::after { right: -20px; background: radial-gradient(circle at 100% 0, transparent 20px, #4b3437 20px); }
.newtab { height: 54px; margin-left: 17px; }
.tabsearch { width: 56px; height: 56px; border-radius: 18px; background: #4b3437; margin-left: auto; display: flex; align-items: center; justify-content: center; }

/* address bar */
.navbar { height: 94px; flex: none; background: #4b3437; border-bottom: 2px solid #4d403f; display: flex; align-items: center; padding: 0 40px 0 30px; }
.navbtns { display: flex; gap: 44px; margin-right: 38px; }
.navbtns svg { width: 28px; height: 28px; }
.omnibox { flex: 1; height: 68px; border-radius: 34px; background: #351f24; display: flex; align-items: center; gap: 32px; padding: 0 32px 0 11px; }
.siteinfo { width: 48px; height: 48px; border-radius: 50%; background: #4b3437; display: flex; align-items: center; justify-content: center; }
.omnibox input { flex: 1; margin-left: -17px; border: 0; padding: 0; background: none; color: #f3dde0; font: 28px Inter, sans-serif; }
.dl { margin-left: 36px; }
.avatar { width: 40px; height: 40px; margin: 0 48px 0 36px; border-radius: 50%; background: #1e4a3d; color: #fff; font-size: 20px; }

/* draw.io header */
.app { position: relative; flex: 1; min-height: 0; display: flex; flex-direction: column; }
.app::before { content: ""; position: absolute; left: 0; right: 0; top: 0; height: 32px; background: linear-gradient(rgba(0,0,0,.27), rgba(0,0,0,.07) 50%, transparent); }
.apphead { height: 132px; flex: none; display: flex; padding: 0 12px 0 32px; border-bottom: 2px solid #fff; box-shadow: inset 0 -2px #dadce0; }
.logo { width: 64px; height: 72px; margin: 28px 40px 0 0; border-radius: 6px; background: #e69a50; }
.headmain { flex: 1; padding-top: 18px; }
h1 { margin: 0; font-size: 34px; line-height: 44px; font-weight: 400; }
.appmenu { display: flex; align-items: center; gap: 31px; font-size: 27px; height: 70px; }
.unsaved { height: 52px; margin-left: -2px; border: 2px solid #dba6ab; border-radius: 5px; background: #e6cccd; color: #ac2f2b; font-size: 24px; padding: 0 17px; display: flex; align-items: center; gap: 8px; }
.headright { display: flex; flex-direction: column; align-items: flex-end; padding-top: 11px; }
.sun { margin-right: 9px; }
.share { width: 158px; height: 64px; margin: 6px 56px 0 0; border: 2px solid #dadce0; border-radius: 8px; background: #e5983d; font: 29px "Liberation Sans", sans-serif; display: flex; align-items: center; justify-content: center; gap: 10px; }

/* icon toolbar */
.toolbar { height: 74px; flex: none; display: flex; align-items: center; border-bottom: 2px solid #dadce0; }
.group { width: 146px; height: 40px; flex: none; display: flex; align-items: center; justify-content: center; gap: 28px; padding-left: 3px; border-right: 2px solid #e1e3e6; }
.group button svg { width: 32px; height: 32px; }
.group .lay svg { width: 36px; height: 36px; }
.car { width: 16px; height: 8px; }
.mid { color: #7d7f81; }
.light { color: #a9abac; }
.g-first { width: 133px; gap: 12px; padding-left: 18px; }
.g-zoom { width: 159px; font-size: 27px; gap: 26px; }
.one { width: 86px; }
.g-three { width: 206px; }
.g-conn { width: 202px; gap: 12px; }
.gapl { margin-left: 16px; }
.g-plus { width: 114px; gap: 14px; padding-left: 0; }
.g-table { width: 106px; gap: 13px; border: 0; padding-left: 0; }
.toolright { margin-left: auto; display: flex; gap: 16px; padding-right: 34px; }
.toolright svg { width: 24px; height: 24px; }

/* shape library */
.work { flex: 1; min-height: 0; display: flex; }
.sidebar { width: 426px; flex: none; border-right: 2px solid #dadce0; display: flex; flex-direction: column; }
.palettes { position: relative; flex: 1; min-height: 0; overflow: hidden; }
.palette { display: grid; grid-template-columns: repeat(5, 72px); grid-auto-rows: 68px; padding-left: 21px; width: 404px; }
.palette svg { width: 72px; height: 68px; overflow: visible; fill: none; stroke: #000; stroke-width: 6; }
.palette text { fill: #000; stroke: none; font-family: "Liberation Sans", sans-serif; text-anchor: middle; }
.palette .s text { text-anchor: start; }
.palette .b { font-weight: 700; }
.palette .f { fill: #000; stroke: none; }
.palette .r { stroke: #ee3124; }
.palette .fr { fill: #ee3124; stroke: none; }
.palette .ll { stroke: #77787a; stroke-width: 8; stroke-dasharray: 24 3; }
.general { margin-top: -52px; padding-bottom: 11px; border-bottom: 2px solid #dadce0; }
.uml { padding-top: 13px; }
.sections { width: 404px; display: flex; flex-direction: column; }
.sections button { height: 70px; border-bottom: 2px solid #e2e4e7; padding: 2px 0 0 16px; font-size: 26px; font-weight: 500; display: flex; align-items: center; }
.sections button:nth-child(3n+2), .sections .open { height: 71px; }
.sections button::before { content: ""; width: 25px; height: 16px; background: #9b9c9d; clip-path: polygon(0 0, 8px 50%, 0 100%); }
.sections .open { padding-left: 12px; }
.sections .open::before { width: 29px; height: 8px; clip-path: polygon(0 0, 16px 0, 8px 100%); }
.sidescroll { position: absolute; right: 3px; top: 441px; bottom: 84px; width: 14px; border-radius: 7px; background: #d9dadc; }
.more { height: 107px; flex: none; border-top: 2px solid #dadce0; padding-top: 23px; text-align: center; }
.more button { width: 232px; height: 59px; border: 2px solid #d5d9e0; border-radius: 6px; background: linear-gradient(#5c90f8, #5985e2); color: #fff; font: 28px "Liberation Sans", sans-serif; }

/* drawing area */
.canvas { position: relative; flex: 1; min-width: 0; background: #fbfbfb; display: flex; flex-direction: column; }
.viewport { flex: 1; min-height: 0; margin: 0 18px 18px 0; overflow: hidden; padding: 72px 0 0 200px; }
.paper { height: 100%; border: solid #e0e0e0; border-width: 1px 0 0 1px; box-shadow: 0 0 4px rgba(0,0,0,.2); background:
  linear-gradient(#fff, #fff) 0 0 / 100% 2px no-repeat,
  linear-gradient(#fff, #fff) 0 0 / 2px 100% no-repeat,
  linear-gradient(#d0d0d0 1px, transparent 1px) 0 0 / 72px 72px,
  linear-gradient(90deg, #d0d0d0 1px, transparent 1px) 0 0 / 72px 72px,
  linear-gradient(#f5f5f5 2px, transparent 2px) 0 0 / 18px 18px,
  linear-gradient(90deg, #f5f5f5 2px, transparent 2px) 0 0 / 18px 18px, #fff; }
.diagram { fill: none; stroke: #000; stroke-width: 2; }
.diagram .uses { fill: #fff; }
.diagram text { fill: #000; stroke: none; font-family: "Liberation Sans", sans-serif; font-weight: 700; text-anchor: middle; }
.diagram .st { text-anchor: start; }
.diagram .n { font-weight: 400; }
.vscroll, .hscroll { position: absolute; background: #e1e1e1; border-radius: 7px; }
.vscroll { right: 1px; top: 28%; height: 524px; width: 14px; }
.hscroll { left: 28%; width: 778px; bottom: 75px; height: 14px; }
.pages { height: 74px; flex: none; background: #f1f3f5; border-top: 2px solid #dadce0; display: flex; }
.pages button { display: flex; align-items: center; justify-content: center; }
.pdots { width: 60px; }
.pages .ptab { width: 158px; gap: 17px; padding-left: 3px; background: #fff; color: #707070; font-weight: 600; border: solid #dadce0; border-width: 0 2px; }
.padd { width: 60px; }

/* format panel */
.format { width: 482px; flex: none; border-left: 2px solid #dadce0; color: #616366; }
.ftabs { display: flex; height: 68px; font-size: 26px; font-weight: 700; }
.ftabs button { width: 214px; background: #e4e4e4; border: solid #d9dbe0; border-width: 0 0 2px 2px; padding-bottom: 4px; }
.ftabs .cur { width: 212px; background: none; border: 0; padding: 0; }
.ftabs .fx { flex: 1; display: flex; justify-content: center; align-items: center; color: #b8c4d8; }
.fx .x { stroke-width: 5; }
section { border-bottom: 2px solid #dadce0; padding: 0 32px 0 28px; }
h2 { margin: 0; font-size: 24px; line-height: 30px; font-weight: 700; }
label { display: flex; align-items: center; gap: 12px; }
.row { display: flex; align-items: center; height: 48px; }
.r46 { height: 46px; }
input[type=checkbox] { appearance: none; width: 26px; height: 26px; margin: 0; border: 2px solid #767676; border-radius: 5px; background: #fff; }
input[type=checkbox]:checked { border: 0; background: #3374f6; position: relative; }
input[type=checkbox]:checked::after { content: ""; position: absolute; left: 9px; top: 3px; width: 8px; height: 16px; border: solid #fff; border-width: 0 4px 4px 0; transform: rotate(40deg); }
.view { padding-top: 29px; padding-bottom: 15px; }
.view h2 { margin-bottom: 14px; }
.right { margin-left: auto; display: flex; align-items: center; }
.num { width: 95px; height: 42px; border: 2px solid #d9dbe0; border-radius: 6px; padding: 2px 4px 0; text-align: right; font: 24px "Liberation Sans", sans-serif; }
.spin { width: 25px; height: 42px; border: 2px solid #d9dbe0; border-radius: 6px; margin: 0 8px 0 1px; display: flex; flex-direction: column; }
.spin button { flex: 1; display: flex; align-items: center; justify-content: center; }
.spin button + button { border-top: 2px solid #d9dbe0; }
.btn { height: 44px; border: 2px solid #d9dbe0; border-radius: 6px; background: #eee; color: #000; font: 24px "Liberation Sans", sans-serif; }
.color { width: 92px; display: flex; align-items: center; gap: 6px; padding-left: 6px; }
.color i { width: 46px; height: 28px; border: 2px solid #000; background: #cfcfcf; }
.ind { padding-left: 38px; }
.change { width: 220px; margin-left: auto; }
.half { width: 208px; }
.opts { padding-top: 25px; padding-bottom: 15px; }
.opts h2 { margin-bottom: 11px; }
.papersec { padding-top: 25px; height: 181px; }
.selwrap { position: relative; width: 412px; margin-top: 9px; }
select { appearance: none; width: 100%; height: 43px; border: 2px solid #d9dbe0; border-radius: 6px; background: #eee; padding: 0 12px; font: 24px "Liberation Sans", sans-serif; color: #000; }
.selwrap svg { position: absolute; right: 8px; top: 14px; }
.radios { display: flex; gap: 20px; padding: 14px 0 0 18px; line-height: 34px; }
.radios label { align-items: flex-start; }
input[type=radio] { appearance: none; width: 26px; height: 26px; margin: 0; border: 2px solid #767676; border-radius: 50%; background: #fff; }
input[type=radio]:checked { border-color: #3374f6; background: radial-gradient(#3374f6 8px, #fff 9px); }
.acts { padding-top: 24px; padding-bottom: 20px; display: flex; flex-direction: column; gap: 4px; }
.acts .btn { height: 40px; }
```
